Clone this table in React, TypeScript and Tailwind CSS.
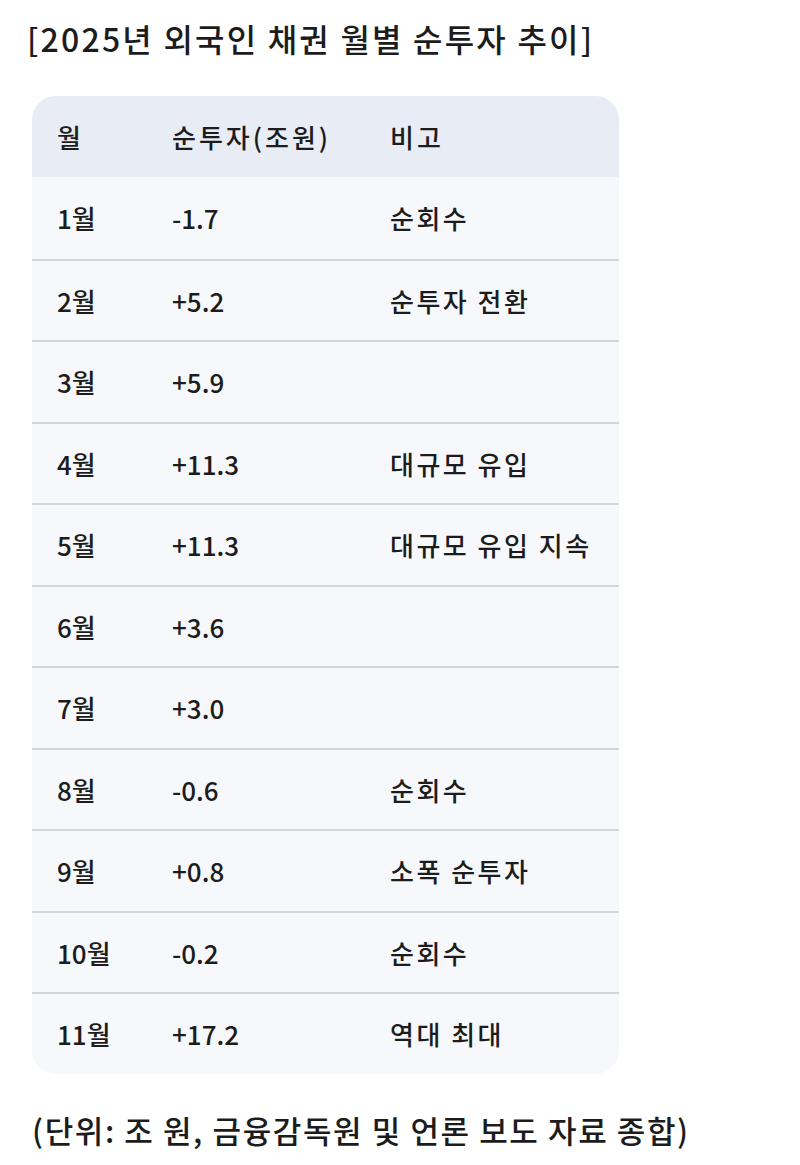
const rows: [string, string, string][] = [
  ['1월', '-1.7', '순회수'],
  ['2월', '+5.2', '순투자 전환'],
  ['3월', '+5.9', ''],
  ['4월', '+11.3', '대규모 유입'],
  ['5월', '+11.3', '대규모 유입 지속'],
  ['6월', '+3.6', ''],
  ['7월', '+3.0', ''],
  ['8월', '-0.6', '순회수'],
  ['9월', '+0.8', '소폭 순투자'],
  ['10월', '-0.2', '순회수'],
  ['11월', '+17.2', '역대 최대'],
];

export default function App() {
  return (
    <div
      className="min-h-[1165px] bg-white text-[#1c1c1c] font-medium"
      style={{ fontFamily: '"Noto Sans CJK KR", "Noto Sans", sans-serif' }}
    >
      <h1 className="pl-[27px] pt-[16px] text-[32px] leading-[44px] font-medium tracking-[2.2px]">
        [2025년 외국인 채권 월별 순투자 추이]
      </h1>

      <div className="ml-8 mt-[36px] w-[587px] overflow-hidden rounded-[24px] bg-[#f7f8fc]">
        <div className="flex h-[81px] items-center bg-[#e8ecf4] text-[26px]">
          <div className="w-[140px] pl-[25px]">월</div>
          <div className="w-[218px] tracking-[3px]">순투자(조원)</div>
          <div className="flex-1 tracking-[3px]">비고</div>
        </div>
        {rows.map(([m, v, note], i) => (
          <div
            key={m}
            className={`flex h-[81.5px] items-center text-[26px] ${i > 0 ? 'border-t-2 border-[#d4d5d8]' : ''}`}
          >
            <div className="w-[140px] pl-[25px]">{m}</div>
            <div className="w-[218px]">{v}</div>
            <div className="flex-1 tracking-[2.5px]">{note}</div>
          </div>
        ))}
      </div>

      <p className="mt-[34px] pl-[32px] text-[31px] leading-[44px] tracking-[1.6px]">
        (단위: 조 원, 금융감독원 및 언론 보도 자료 종합)
      </p>
    </div>
  );
}
